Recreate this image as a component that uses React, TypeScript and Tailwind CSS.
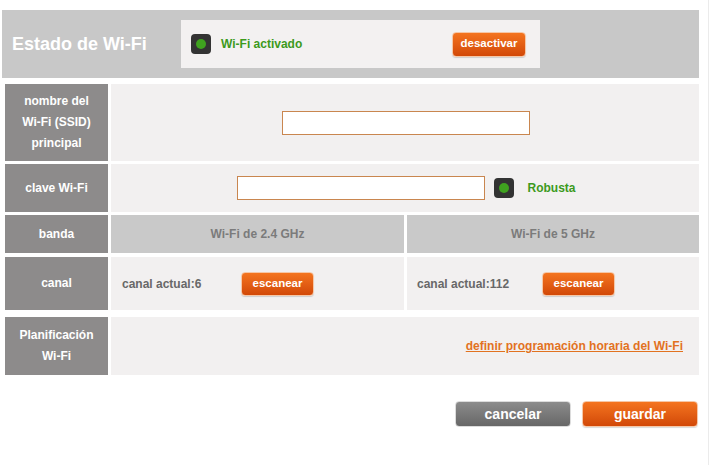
import React from "react"

const font = { fontFamily: '"Liberation Sans", Arial, sans-serif' }

function Led() {
  return (
    <span className="flex h-[20px] w-[20px] items-center justify-center rounded-[4px] bg-[#333333]">
      <span className="h-[10px] w-[10px] rounded-full bg-[#3fa21f]" />
    </span>
  )
}

function OrangeButton({ label, className }: { label: string; className: string }) {
  return (
    <button
      className={
        "rounded-[4px] border border-[#f6c7a6] bg-gradient-to-b from-[#f4741f] to-[#d24807] font-bold text-white shadow-[0_1px_1px_rgba(0,0,0,0.15)] " +
        className
      }
    >
      {label}
    </button>
  )
}

function Label({ children }: { children: React.ReactNode }) {
  return (
    <div className="flex w-[103px] shrink-0 items-center justify-center bg-[#8d8b8b] px-1 text-center text-[12px] font-bold leading-[21px] text-white">
      {children}
    </div>
  )
}

export default function App() {
  return (
    <div className="flex min-h-[465px] bg-white" style={font}>
      <div className="w-[709px] border-r border-[#ebebeb] pt-[10px]">
        {/* estado */}
        <div className="ml-[2px] flex h-[68px] w-[697px] items-center bg-[#c8c8c8]">
          <div className="w-[179px] pl-[10px] text-[18px] font-bold text-white">Estado de Wi-Fi</div>
          <div className="flex h-[48px] w-[359px] items-center bg-[#f3f1f1] pl-[10px] pr-[14px]">
            <Led />
            <span className="ml-[10px] text-[12px] font-bold text-[#3c9a1c]">Wi-Fi activado</span>
            <OrangeButton label="desactivar" className="ml-auto h-[25px] w-[74px] text-[11.5px]" />
          </div>
        </div>

        <div className="ml-[5px] mt-[6px] flex w-[694px] flex-col">
          <div className="flex h-[77px] gap-[3px]">
            <Label>
              nombre del
              <br />
              Wi-Fi (SSID)
              <br />
              principal
            </Label>
            <div className="flex flex-1 items-center justify-center bg-[#f2f0f0] pl-[2px]">
              <input className="h-[24px] w-[248px] border border-[#c9864f] bg-white outline-none" />
            </div>
          </div>

          <div className="mt-[3px] flex h-[48px] gap-[3px]">
            <Label>clave Wi-Fi</Label>
            <div className="flex flex-1 items-center justify-center bg-[#f2f0f0] pl-[2px]">
              <input className="h-[24px] w-[248px] border border-[#c9864f] bg-white outline-none" />
              <span className="ml-[9px]">
                <Led />
              </span>
              <span className="ml-[14px] text-[12px] font-bold text-[#3c9a1c]">Robusta</span>
            </div>
          </div>

          <div className="mt-[3px] flex h-[38px] gap-[3px]">
            <Label>banda</Label>
            <div className="grid flex-1 grid-cols-[293px_1fr] gap-[3px]">
              <div className="flex items-center justify-center bg-[#c9c9c9] text-[12px] font-bold text-[#7b7b7b]">
                Wi-Fi de 2.4 GHz
              </div>
              <div className="flex items-center justify-center bg-[#c9c9c9] text-[12px] font-bold text-[#7b7b7b]">
                Wi-Fi de 5 GHz
              </div>
            </div>
          </div>

          <div className="mt-[4px] flex h-[53px] gap-[3px]">
            <Label>canal</Label>
            <div className="grid flex-1 grid-cols-[293px_1fr] gap-[3px]">
              <div className="flex items-center bg-[#f2f0f0] pl-[11px]">
                <span className="w-[119px] text-[12px] font-bold text-[#686868]">canal actual:6</span>
                <OrangeButton label="escanear" className="h-[24px] w-[73px] text-[11.5px]" />
              </div>
              <div className="flex items-center bg-[#f2f0f0] pl-[10px]">
                <span className="w-[125px] text-[12px] font-bold text-[#686868]">canal actual:112</span>
                <OrangeButton label="escanear" className="h-[24px] w-[73px] text-[11.5px]" />
              </div>
            </div>
          </div>

          <div className="mt-[7px] flex h-[58px] gap-[3px]">
            <Label>
              Planificación
              <br />
              Wi-Fi
            </Label>
            <div className="flex flex-1 items-center justify-end bg-[#f2f0f0] pr-[16px]">
              <a className="text-[12px] font-bold text-[#e2721f] underline">definir programación horaria del Wi-Fi</a>
            </div>
          </div>

          <div className="mt-[26px] flex justify-end gap-[11px] pr-[1px]">
            <button className="h-[26px] w-[116px] rounded-[4px] border border-[#dcdcdc] bg-gradient-to-b from-[#8c8c8c] to-[#676767] text-[14px] font-bold text-white">
              cancelar
            </button>
            <OrangeButton label="guardar" className="h-[26px] w-[116px] text-[14px]" />
          </div>
        </div>
      </div>
    </div>
  )
}
